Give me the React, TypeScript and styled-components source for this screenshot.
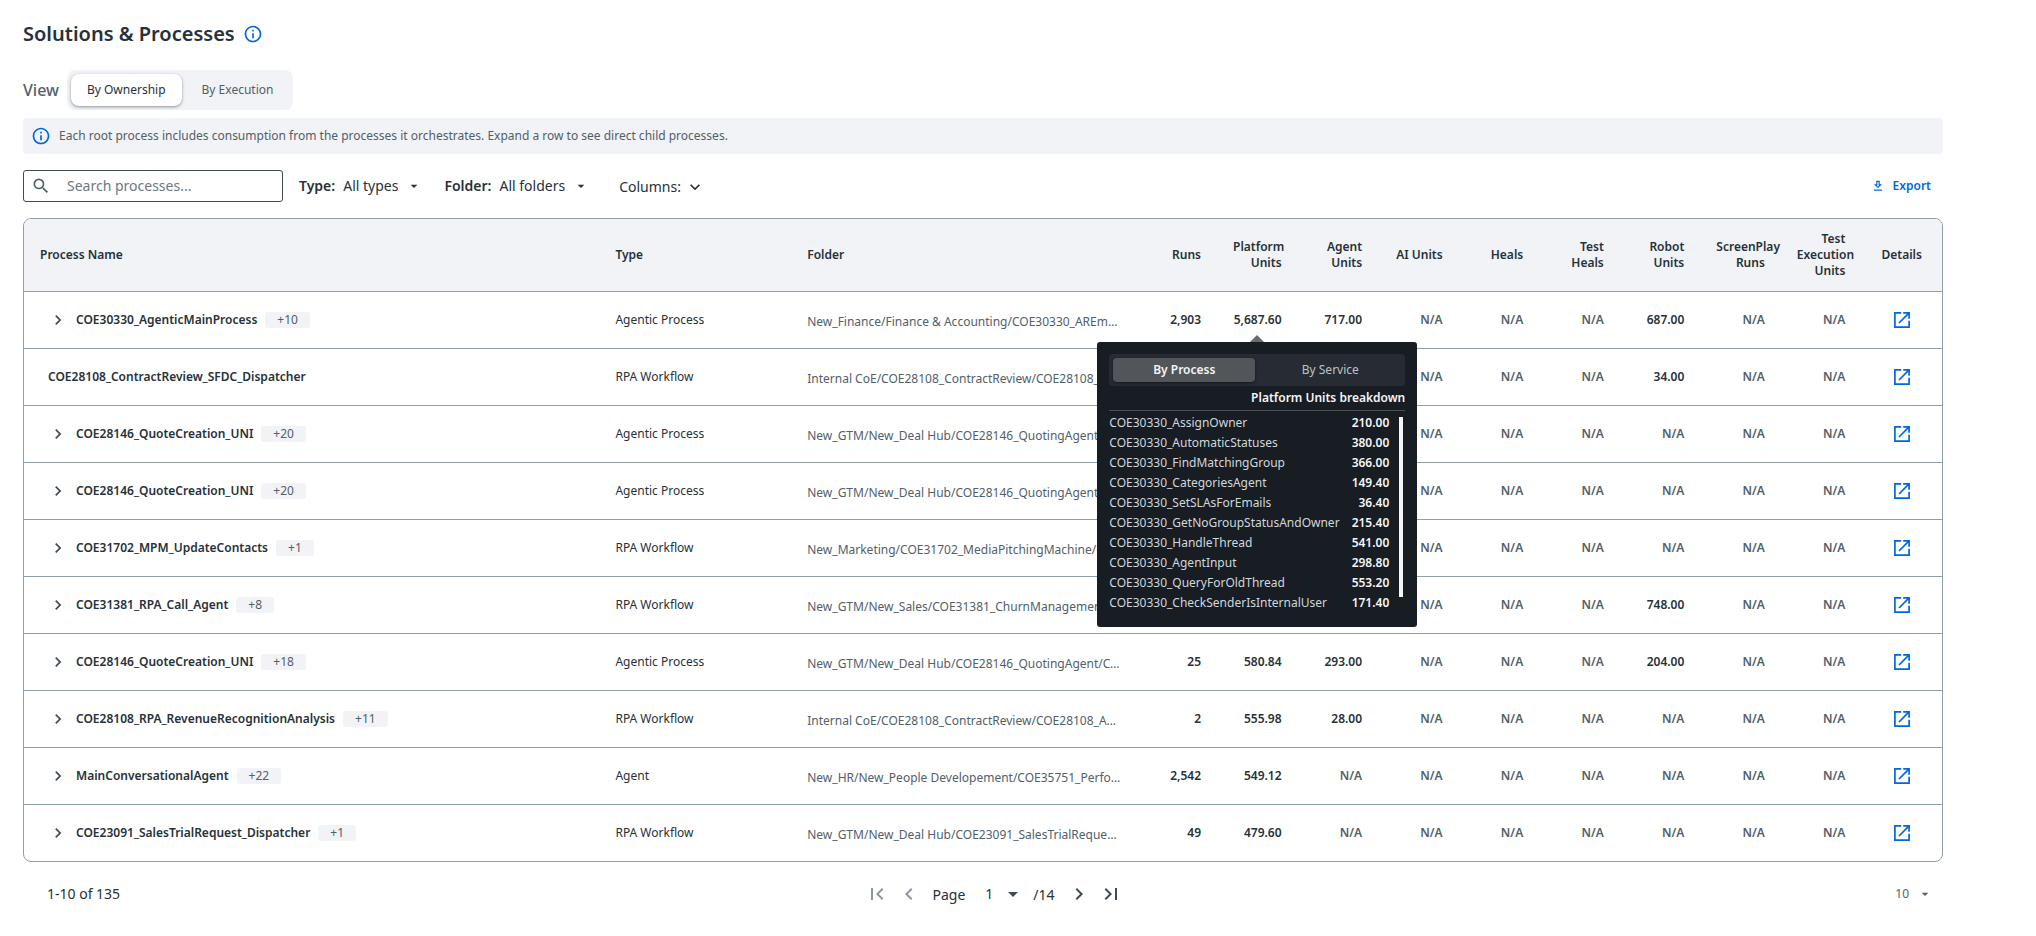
import React from "react";
import styled, { createGlobalStyle } from "styled-components";
import {
  MdOutlineInfo,
  MdSearch,
  MdArrowDropDown,
  MdChevronLeft,
  MdChevronRight,
  MdFirstPage,
  MdLastPage,
  MdExpandMore,
} from "react-icons/md";

const color = {
  text: "#273139",
  muted: "#526069",
  border: "#8f9fa9",
  field: "#3f4c55",
  surface: "#f1f3f7",
  link: "#0067df",
  disabled: "#8a97a0",
  tip: "#181c23",
};

const GlobalStyle = createGlobalStyle`
  *, *::before, *::after { box-sizing: border-box; }
  body {
    margin: 0;
    background: #fff;
    color: ${color.text};
    font-family: "Noto Sans", sans-serif;
    font-size: 12px;
    line-height: 16px;
  }
  button, input, select { font: inherit; color: inherit; margin: 0; }
`;

const Page = styled.main`
  padding: 20px 93px 16px 23px;
`;

const TitleRow = styled.header`
  display: flex;
  align-items: center;
  gap: 8px;
  height: 28px;
  color: ${color.link};
`;

const Title = styled.h1`
  margin: 0;
  font-size: 20px;
  line-height: 28px;
  font-weight: 600;
  color: ${color.text};
`;

const ViewRow = styled.div`
  display: flex;
  align-items: center;
  gap: 8px;
  margin-top: 22px;
`;

const ViewLabel = styled.span`
  font-size: 16px;
  line-height: 24px;
  font-weight: 500;
  color: ${color.muted};
`;

const Segmented = styled.div`
  display: flex;
  gap: 4px;
  height: 40px;
  padding: 4px;
  border-radius: 8px;
  background: ${color.surface};
`;

const Segment = styled.button<{ $active?: boolean }>`
  border: 0;
  padding: 0 16px;
  border-radius: 8px;
  background: ${(p) => (p.$active ? "#fff" : "transparent")};
  color: ${(p) => (p.$active ? color.text : color.muted)};
  box-shadow: ${(p) => (p.$active ? "0 1px 3px rgba(39, 49, 57, 0.5)" : "none")};
`;

const Banner = styled.p`
  display: flex;
  align-items: center;
  gap: 8px;
  height: 36px;
  margin: 8px 0 0;
  padding: 0 8px;
  border-radius: 4px;
  background: ${color.surface};
  color: ${color.muted};
  svg { color: ${color.link}; }
`;

const Toolbar = styled.div`
  display: flex;
  align-items: center;
  height: 32px;
  margin-top: 16px;
  font-size: 14px;
  line-height: 20px;
`;

const SearchBox = styled.label`
  display: flex;
  align-items: center;
  gap: 16px;
  width: 260px;
  height: 32px;
  margin-right: 16px;
  padding: 0 7px;
  border: 1px solid ${color.field};
  border-radius: 3px;
  color: ${color.muted};
  svg { flex: none; }
`;

const SearchInput = styled.input`
  flex: 1;
  min-width: 0;
  padding: 0;
  border: 0;
  outline: 0;
  background: none;
  &::placeholder { color: #6b7882; opacity: 1; }
`;

const Filter = styled.label`
  display: flex;
  align-items: center;
  margin-right: 22px;
`;

const FilterName = styled.span`
  font-weight: 600;
  margin-right: 8px;
`;

const SelectWrap = styled.span`
  display: flex;
  align-items: center;
  gap: 8px;
`;

const BareSelect = styled.select`
  appearance: none;
  field-sizing: content;
  padding: 0;
  border: 0;
  background: none;
  outline: 0;
`;

const ColumnsButton = styled.button`
  display: flex;
  align-items: center;
  gap: 4px;
  margin-left: 8px;
  padding: 2px 0 0;
  border: 0;
  background: none;
`;

const ExportButton = styled.button`
  display: flex;
  align-items: center;
  gap: 8px;
  margin-left: auto;
  padding: 0 12px;
  border: 0;
  background: none;
  font-size: 12px;
  font-weight: 600;
  color: ${color.link};
`;

const TableFrame = styled.div`
  margin-top: 16px;
  border: 1px solid ${color.border};
  border-radius: 8px;
`;

const Table = styled.table`
  width: 100%;
  table-layout: fixed;
  border-collapse: separate;
  border-spacing: 0;
`;

const Col = styled.col<{ $share: number }>`
  width: ${(p) => p.$share}%;
`;

const HeadCell = styled.th<{ $align?: "left" | "right" | "center" }>`
  height: 73px;
  padding: 0 16px;
  text-align: ${(p) => p.$align ?? "left"};
  font-weight: 600;
  background: ${color.surface};
  border-bottom: 1px solid ${color.border};
  &:first-child { border-top-left-radius: 7px; }
  &:last-child { border-top-right-radius: 7px; }
`;

const Row = styled.tr`
  &:last-child > td { height: 56px; border-bottom: 0; }
`;

const Cell = styled.td<{ $align?: "left" | "right" | "center" }>`
  position: relative;
  height: 57px;
  padding: 0 16px;
  text-align: ${(p) => p.$align ?? "left"};
  border-bottom: 1px solid ${color.border};
`;

const Metric = styled.span<{ $empty?: boolean }>`
  font-weight: 600;
  color: ${(p) => (p.$empty ? color.muted : color.text)};
`;

const NameGroup = styled.div`
  display: flex;
  align-items: center;
  gap: 8px;
  padding-left: 8px;
  font-weight: 600;
`;

const IconButton = styled.button`
  display: inline-flex;
  padding: 0;
  border: 0;
  background: none;
  color: ${color.field};
  &:disabled { color: ${color.disabled}; }
`;

const Chip = styled.span`
  padding: 0 12px;
  border-radius: 3px;
  background: ${color.surface};
  color: ${color.muted};
  font-weight: 400;
`;

const FolderPath = styled.span`
  display: block;
  padding-top: 3px;
  overflow: hidden;
  text-overflow: ellipsis;
  white-space: nowrap;
  color: ${color.muted};
`;

const DetailsLink = styled.a`
  display: inline-flex;
  vertical-align: middle;
  color: ${color.link};
`;

const Popover = styled.section`
  position: absolute;
  z-index: 1;
  top: 50px;
  left: 50%;
  width: 320px;
  height: 285px;
  margin-left: -160px;
  padding: 12px;
  border-radius: 3px;
  background: ${color.tip};
  color: #f4f5f7;
  text-align: left;
  &::before {
    content: "";
    position: absolute;
    bottom: 100%;
    left: 50%;
    margin-left: -7px;
    border: 7px solid transparent;
    border-top: 0;
    border-bottom-color: #6b6b6b;
  }
`;

const PopoverTabs = styled.div`
  display: grid;
  grid-template-columns: 1fr 1fr;
  gap: 4px;
  height: 32px;
  padding: 4px;
  border-radius: 4px;
  background: #272b33;
`;

const PopoverTab = styled.button<{ $active?: boolean }>`
  border: 0;
  padding: 0;
  border-radius: 4px;
  font-weight: ${(p) => (p.$active ? 600 : 400)};
  background: ${(p) => (p.$active ? "#52565a" : "transparent")};
  color: ${(p) => (p.$active ? "#f4f5f7" : "#bbc3c9")};
  box-shadow: ${(p) => (p.$active ? "0 1px 3px rgba(0, 0, 0, 0.5)" : "none")};
`;

const PopoverTitle = styled.h2`
  margin: 0;
  padding: 4px 0;
  text-align: right;
  font-size: 12px;
  line-height: 16px;
  font-weight: 600;
  border-bottom: 1px solid #4a4f55;
`;

const Breakdown = styled.div`
  display: flex;
  justify-content: space-between;
  padding-top: 2px;
`;

const BreakdownList = styled.dl`
  flex: 1;
  margin: 0;
`;

const BreakdownItem = styled.div`
  display: flex;
  justify-content: space-between;
  padding-right: 10px;
  line-height: 20px;
  color: #cfd8dd;
`;

const BreakdownValue = styled.dd`
  margin: 0;
  font-weight: 600;
  color: #f4f5f7;
`;

const ScrollThumb = styled.div`
  width: 4px;
  height: 180px;
  margin: 4px 2px 0 0;
  background: #f4f5f7;
`;

const Footer = styled.footer`
  display: grid;
  grid-template-columns: 1fr auto 1fr;
  align-items: center;
  height: 64px;
  padding: 0 2px 0 24px;
  font-size: 14px;
  line-height: 20px;
`;

const Pager = styled.nav`
  display: flex;
  align-items: center;
  gap: 8px;
`;

const PageLabel = styled.label`
  display: flex;
  align-items: center;
  gap: 20px;
  margin-left: 3px;
  svg { color: ${color.field}; }
`;

const PagerText = styled.span`
  padding-top: 2px;
`;

const PagerNext = styled.div`
  display: flex;
  gap: 8px;
  margin-left: 4px;
`;

const PageSize = styled.label`
  justify-self: end;
  margin-right: 8px;
  font-size: 12px;
  color: ${color.muted};
`;

function OpenIcon() {
  return (
    <svg width="16" height="16" viewBox="0 0 16 16" fill="none" stroke="currentColor" strokeWidth="1.7" aria-hidden="true">
      <path d="M7.2 .9H.9v14.2h14.2V8.8" />
      <path d="M9.2 .9h5.9v5.9M14.8 1.2 5 11" />
    </svg>
  );
}

function DownloadIcon() {
  return (
    <svg width="14" height="14" viewBox="0 0 24 24" fill="currentColor" aria-hidden="true">
      <path d="M13 5v6h1.17L12 13.17 9.83 11H11V5h2m2-2H9v6H5l7 7 7-7h-4V3zm4 15H5v2h14v-2z" />
    </svg>
  );
}

type Metrics = (string | undefined)[];

interface Process {
  name: string;
  children?: number;
  type: string;
  folder: string;
  metrics: Metrics;
}

const NA = "N/A";

const processes: Process[] = [
  { name: "COE30330_AgenticMainProcess", children: 10, type: "Agentic Process", folder: "New_Finance/Finance & Accounting/COE30330_AREmailAgent", metrics: ["2,903", "5,687.60", "717.00", NA, NA, NA, "687.00", NA, NA] },
  { name: "COE28108_ContractReview_SFDC_Dispatcher", type: "RPA Workflow", folder: "Internal CoE/COE28108_ContractReview/COE28108_SFDC", metrics: [undefined, undefined, undefined, NA, NA, NA, "34.00", NA, NA] },
  { name: "COE28146_QuoteCreation_UNI", children: 20, type: "Agentic Process", folder: "New_GTM/New_Deal Hub/COE28146_QuotingAgent/COE28146", metrics: [undefined, undefined, undefined, NA, NA, NA, NA, NA, NA] },
  { name: "COE28146_QuoteCreation_UNI", children: 20, type: "Agentic Process", folder: "New_GTM/New_Deal Hub/COE28146_QuotingAgent/COE28146", metrics: [undefined, undefined, undefined, NA, NA, NA, NA, NA, NA] },
  { name: "COE31702_MPM_UpdateContacts", children: 1, type: "RPA Workflow", folder: "New_Marketing/COE31702_MediaPitchingMachine/COE31702", metrics: [undefined, undefined, undefined, NA, NA, NA, NA, NA, NA] },
  { name: "COE31381_RPA_Call_Agent", children: 8, type: "RPA Workflow", folder: "New_GTM/New_Sales/COE31381_ChurnManagement/COE31381", metrics: [undefined, undefined, undefined, NA, NA, NA, "748.00", NA, NA] },
  { name: "COE28146_QuoteCreation_UNI", children: 18, type: "Agentic Process", folder: "New_GTM/New_Deal Hub/COE28146_QuotingAgent/COE28146", metrics: ["25", "580.84", "293.00", NA, NA, NA, "204.00", NA, NA] },
  { name: "COE28108_RPA_RevenueRecognitionAnalysis", children: 11, type: "RPA Workflow", folder: "Internal CoE/COE28108_ContractReview/COE28108_Analysis", metrics: ["2", "555.98", "28.00", NA, NA, NA, NA, NA, NA] },
  { name: "MainConversationalAgent", children: 22, type: "Agent", folder: "New_HR/New_People Developement/COE35751_Performance", metrics: ["2,542", "549.12", NA, NA, NA, NA, NA, NA, NA] },
  { name: "COE23091_SalesTrialRequest_Dispatcher", children: 1, type: "RPA Workflow", folder: "New_GTM/New_Deal Hub/COE23091_SalesTrialRequest_Dispatcher", metrics: ["49", "479.60", NA, NA, NA, NA, NA, NA, NA] },
];

const metricHeads = ["Runs", "Platform Units", "Agent Units", "AI Units", "Heals", "Test Heals", "Robot Units", "ScreenPlay Runs", "Test Execution Units"];

const PLATFORM_UNITS = 1;

const breakdown: [string, string][] = [
  ["COE30330_AssignOwner", "210.00"],
  ["COE30330_AutomaticStatuses", "380.00"],
  ["COE30330_FindMatchingGroup", "366.00"],
  ["COE30330_CategoriesAgent", "149.40"],
  ["COE30330_SetSLAsForEmails", "36.40"],
  ["COE30330_GetNoGroupStatusAndOwner", "215.40"],
  ["COE30330_HandleThread", "541.00"],
  ["COE30330_AgentInput", "298.80"],
  ["COE30330_QueryForOldThread", "553.20"],
  ["COE30330_CheckSenderIsInternalUser", "171.40"],
];

function UnitsBreakdown() {
  return (
    <Popover aria-label="Platform Units breakdown">
      <PopoverTabs>
        <PopoverTab $active>By Process</PopoverTab>
        <PopoverTab>By Service</PopoverTab>
      </PopoverTabs>
      <PopoverTitle>Platform Units breakdown</PopoverTitle>
      <Breakdown>
        <BreakdownList>
          {breakdown.map(([name, value]) => (
            <BreakdownItem key={name}>
              <dt>{name}</dt>
              <BreakdownValue>{value}</BreakdownValue>
            </BreakdownItem>
          ))}
        </BreakdownList>
        <ScrollThumb />
      </Breakdown>
    </Popover>
  );
}

function ProcessRow({ process, open }: { process: Process; open: boolean }) {
  return (
    <Row>
      <Cell>
        <NameGroup>
          {process.children && (
            <IconButton aria-label={`Expand ${process.name}`}>
              <MdChevronRight size={20} />
            </IconButton>
          )}
          <span>{process.name}</span>
          {process.children && <Chip>+{process.children}</Chip>}
        </NameGroup>
      </Cell>
      <Cell>{process.type}</Cell>
      <Cell>
        <FolderPath>{process.folder}</FolderPath>
      </Cell>
      {process.metrics.map((value, i) => (
        <Cell key={metricHeads[i]} $align="right">
          <Metric $empty={value === NA}>{value}</Metric>
          {open && i === PLATFORM_UNITS && <UnitsBreakdown />}
        </Cell>
      ))}
      <Cell $align="center">
        <DetailsLink href="#details" aria-label={`Details of ${process.name}`}>
          <OpenIcon />
        </DetailsLink>
      </Cell>
    </Row>
  );
}

export default function App() {
  return (
    <>
      <GlobalStyle />
      <Page>
        <TitleRow>
          <Title>Solutions &amp; Processes</Title>
          <MdOutlineInfo size={20} />
        </TitleRow>
        <ViewRow>
          <ViewLabel>View</ViewLabel>
          <Segmented>
            <Segment $active>By Ownership</Segment>
            <Segment>By Execution</Segment>
          </Segmented>
        </ViewRow>
        <Banner>
          <MdOutlineInfo size={20} />
          Each root process includes consumption from the processes it orchestrates. Expand a row to see direct child processes.
        </Banner>
        <Toolbar>
          <SearchBox>
            <MdSearch size={20} />
            <SearchInput type="text" placeholder="Search processes..." aria-label="Search processes" />
          </SearchBox>
          <Filter>
            <FilterName>Type:</FilterName>
            <SelectWrap>
              <BareSelect><option>All types</option></BareSelect>
              <MdArrowDropDown size={16} />
            </SelectWrap>
          </Filter>
          <Filter>
            <FilterName>Folder:</FilterName>
            <SelectWrap>
              <BareSelect><option>All folders</option></BareSelect>
              <MdArrowDropDown size={16} />
            </SelectWrap>
          </Filter>
          <ColumnsButton>
            Columns:
            <MdExpandMore size={20} />
          </ColumnsButton>
          <ExportButton>
            <DownloadIcon />
            Export
          </ExportButton>
        </Toolbar>
        <TableFrame>
          <Table>
            <colgroup>
              <Col $share={30} />
              <Col $share={10} />
              <Col $share={18} />
              {metricHeads.map((head) => <Col key={head} $share={4.2} />)}
              <Col $share={4.2} />
            </colgroup>
            <thead>
              <tr>
                <HeadCell>Process Name</HeadCell>
                <HeadCell>Type</HeadCell>
                <HeadCell>Folder</HeadCell>
                {metricHeads.map((head) => <HeadCell key={head} $align="right">{head}</HeadCell>)}
                <HeadCell $align="center">Details</HeadCell>
              </tr>
            </thead>
            <tbody>
              {processes.map((process, i) => <ProcessRow key={i} process={process} open={i === 0} />)}
            </tbody>
          </Table>
        </TableFrame>
        <Footer>
          <span>1-10 of 135</span>
          <Pager aria-label="Pagination">
            <IconButton disabled aria-label="First page"><MdFirstPage size={24} /></IconButton>
            <IconButton disabled aria-label="Previous page"><MdChevronLeft size={24} /></IconButton>
            <PageLabel>
              <PagerText>Page</PagerText>
              <SelectWrap>
                <BareSelect><option>1</option></BareSelect>
                <MdArrowDropDown size={24} />
              </SelectWrap>
            </PageLabel>
            <PagerText>/14</PagerText>
            <PagerNext>
              <IconButton aria-label="Next page"><MdChevronRight size={24} /></IconButton>
              <IconButton aria-label="Last page"><MdLastPage size={24} /></IconButton>
            </PagerNext>
          </Pager>
          <PageSize>
            <SelectWrap>
              <BareSelect aria-label="Rows per page"><option>10</option></BareSelect>
              <MdArrowDropDown size={16} />
            </SelectWrap>
          </PageSize>
        </Footer>
      </Page>
    </>
  );
}
